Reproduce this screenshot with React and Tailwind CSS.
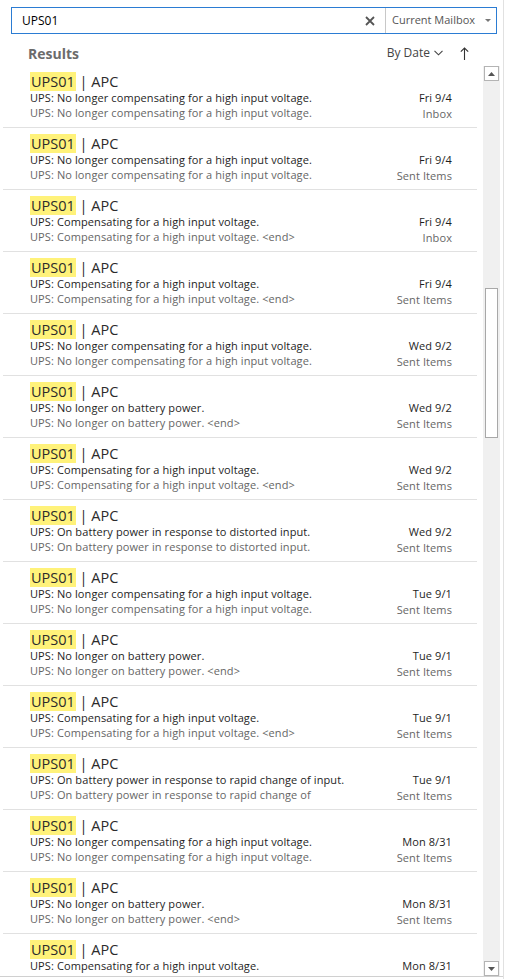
import React from 'react';

const NLC = 'UPS: No longer compensating for a high input voltage.';
const CMP = 'UPS: Compensating for a high input voltage.';
const NLB = 'UPS: No longer on battery power.';

const rows = [
  { subject: NLC, preview: NLC, date: 'Fri 9/4', folder: 'Inbox' },
  { subject: NLC, preview: NLC, date: 'Fri 9/4', folder: 'Sent Items' },
  { subject: CMP, preview: CMP + ' <end>', date: 'Fri 9/4', folder: 'Inbox' },
  { subject: CMP, preview: CMP + ' <end>', date: 'Fri 9/4', folder: 'Sent Items' },
  { subject: NLC, preview: NLC, date: 'Wed 9/2', folder: 'Sent Items' },
  { subject: NLB, preview: NLB + ' <end>', date: 'Wed 9/2', folder: 'Sent Items' },
  { subject: CMP, preview: CMP + ' <end>', date: 'Wed 9/2', folder: 'Sent Items' },
  {
    subject: 'UPS: On battery power in response to distorted input.',
    preview: 'UPS: On battery power in response to distorted input.',
    date: 'Wed 9/2',
    folder: 'Sent Items',
  },
  { subject: NLC, preview: NLC, date: 'Tue 9/1', folder: 'Sent Items' },
  { subject: NLB, preview: NLB + ' <end>', date: 'Tue 9/1', folder: 'Sent Items' },
  { subject: CMP, preview: CMP + ' <end>', date: 'Tue 9/1', folder: 'Sent Items' },
  {
    subject: 'UPS: On battery power in response to rapid change of input.',
    preview: 'UPS: On battery power in response to rapid change of',
    date: 'Tue 9/1',
    folder: 'Sent Items',
  },
  { subject: NLC, preview: NLC, date: 'Mon 8/31', folder: 'Sent Items' },
  { subject: NLB, preview: NLB + ' <end>', date: 'Mon 8/31', folder: 'Sent Items' },
  { subject: CMP, preview: CMP + ' <end>', date: 'Mon 8/31', folder: 'Sent Items' },
];

function ResultRow({ item }) {
  return (
    <div className="h-[62px] shrink-0 border-b border-[#e1e1e1] pt-[6px] pl-[27px] pr-[25px]">
      <div className="text-[14.5px] leading-[19px] text-[#2b2b2b]">
        <span className="bg-[#fff27a] px-[1px]">UPS01</span> | APC
      </div>
      <div className="flex justify-between text-[11px] leading-[14px] tracking-[0.1px] text-[#1e1e1e]">
        <span>{item.subject}</span>
        <span>{item.date}</span>
      </div>
      <div className="flex justify-between text-[11px] tracking-[0.1px] text-[#666666]">
        <span className="leading-[15px]">{item.preview}</span>
        <span className="leading-[18px]">{item.folder}</span>
      </div>
    </div>
  );
}

export default function App() {
  return (
    <div
      className="w-[504px] h-[979px] bg-white border-r border-[#e1e1e1] flex flex-col overflow-hidden"
      style={{ fontFamily: '"Open Sans", "Noto Sans", sans-serif' }}
    >
      {/* search box */}
      <div className="mt-[7px] ml-[11px] w-[486px] h-[27px] border border-[#2b7cd3] flex items-stretch shrink-0">
        <div className="flex-1 flex items-center pl-[10px] text-[12px] text-black">UPS01</div>
        <div className="w-[30px] flex items-center justify-center">
          <svg width="10" height="10" viewBox="0 0 10 10">
            <path d="M1 1 L9 9 M9 1 L1 9" stroke="#555" strokeWidth="1.8" />
          </svg>
        </div>
        <div className="w-[111px] border-l border-[#c8c8c8] flex items-center justify-between pl-[6px] pr-[5px] text-[11px] text-[#555]">
          <span>Current Mailbox</span>
          <svg width="6" height="4" viewBox="0 0 6 4">
            <path d="M0 0 L6 0 L3 3 Z" fill="#777" />
          </svg>
        </div>
      </div>

      {/* header */}
      <div className="h-[32px] shrink-0 flex items-center pt-[6px] pl-[28px] pr-[34px]">
        <span className="flex-1 text-[14px] font-bold text-[#6b6b6b]">Results</span>
        <span className="text-[12px] text-[#444]">By Date</span>
        <svg className="ml-[4px]" width="9" height="6" viewBox="0 0 9 6">
          <path d="M0.5 0.8 L4.5 4.8 L8.5 0.8" stroke="#444" strokeWidth="1.1" fill="none" />
        </svg>
        <svg className="ml-[17px]" width="9" height="13" viewBox="0 0 9 13">
          <path d="M4.5 1 V13 M0.8 4.7 L4.5 1 L8.2 4.7" stroke="#333" strokeWidth="1.1" fill="none" />
        </svg>
      </div>

      {/* list */}
      <div className="flex flex-1 border-b border-[#d0d0d0] min-h-0">
        <div className="ml-[3px] w-[474px] flex flex-col overflow-hidden">
          {rows.map((r, i) => (
            <ResultRow key={i} item={r} />
          ))}
        </div>
        <div className="ml-[6px] w-[17px] bg-[#f0f0f0] flex flex-col">
          <div className="h-[15px] mx-[1px] border border-[#b4b4b4] bg-white flex items-center justify-center">
            <svg width="7" height="4" viewBox="0 0 7 4">
              <path d="M0 4 L7 4 L3.5 0 Z" fill="#555" />
            </svg>
          </div>
          <div className="h-[207px]" />
          <div className="h-[150px] mx-[2px] border border-[#a8a8a8] bg-white" />
          <div className="flex-1" />
          <div className="h-[15px] mx-[1px] border border-[#b4b4b4] bg-white flex items-center justify-center">
            <svg width="7" height="4" viewBox="0 0 7 4">
              <path d="M0 0 L7 0 L3.5 4 Z" fill="#555" />
            </svg>
          </div>
        </div>
      </div>
      <div className="h-[2px] shrink-0" />
    </div>
  );
}
